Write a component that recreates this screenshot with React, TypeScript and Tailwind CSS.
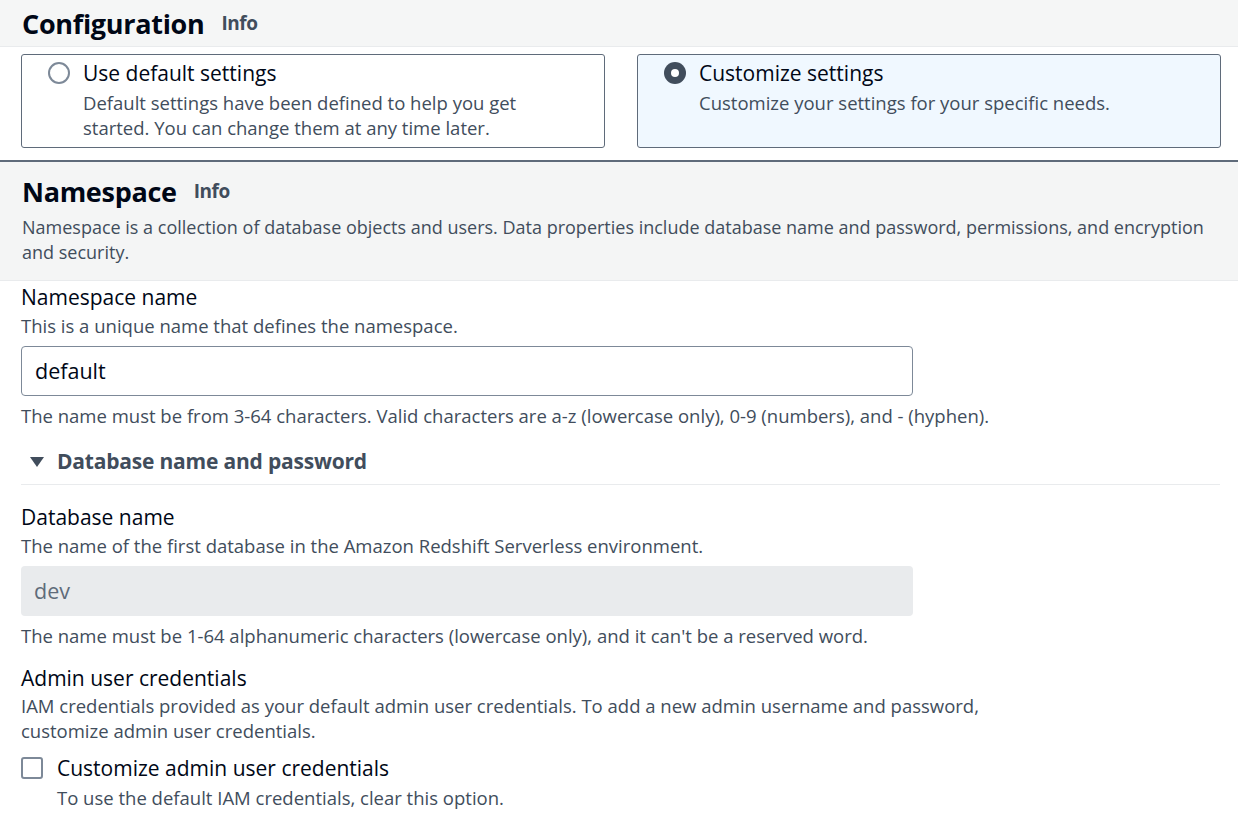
import React from "react";

const Info = () => (
  <span className="ml-[17px] text-[19px] font-bold text-[#414d5c] tracking-tight">Info</span>
);

type TileProps = {
  title: string;
  description: string;
  selected?: boolean;
};

const Tile = ({ title, description, selected }: TileProps) => (
  <div
    className={
      selected
        ? "h-[94px] rounded-[3px] border border-[#5f6b7a] bg-[#f0f8ff] pl-[26px] pr-3 pt-[5px] flex gap-[13px]"
        : "h-[94px] rounded-[3px] border border-[#5f6b7a] bg-white pl-[26px] pr-3 pt-[5px] flex gap-[13px]"
    }
  >
    <div className="pt-[2px]">
      {selected ? (
        <span className="block w-[22px] h-[22px] rounded-full bg-[#414d5c] flex items-center justify-center">
          <span className="block w-[8px] h-[8px] rounded-full bg-white" />
        </span>
      ) : (
        <span className="block w-[22px] h-[22px] rounded-full border-2 border-[#7d8998] bg-white" />
      )}
    </div>
    <div>
      <div className="text-[21px] leading-[27px] text-[#000716]">{title}</div>
      <div className="text-[18.5px] leading-[25px] text-[#414d5c] mt-[3px] max-w-[460px]">{description}</div>
    </div>
  </div>
);

const Field = ({
  label,
  description,
  children,
}: {
  label: string;
  description: React.ReactNode;
  children?: React.ReactNode;
}) => (
  <div>
    <div className="text-[21px] leading-[27px] text-[#000716]">{label}</div>
    <div className="text-[18.5px] leading-[25px] text-[#414d5c] mt-[2px]">{description}</div>
    {children}
  </div>
);

export default function App() {
  return (
    <div className="w-[1238px] min-h-[821px] bg-white font-['Open_Sans',sans-serif] text-[#000716]">
      {/* configuration header */}
      <div className="h-[47px] bg-[#f5f6f6] border-b border-[#e9ebed] px-[22px] flex items-center">
        <h2 className="text-[27px] font-bold tracking-[-0.3px] leading-none">Configuration</h2>
        <Info />
      </div>

      <div className="grid grid-cols-2 gap-8 pl-[21px] pr-[17px] pt-[7px] pb-[12px]">
        <Tile
          title="Use default settings"
          description="Default settings have been defined to help you get started. You can change them at any time later."
        />
        <Tile
          selected
          title="Customize settings"
          description="Customize your settings for your specific needs."
        />
      </div>

      {/* namespace */}
      <div className="border-t-2 border-[#5f6b7a]">
        <div className="bg-[#f4f5f5] border-b border-[#e9ebed] pl-[22px] pr-[16px] pt-[13px] pb-[15px]">
          <div className="flex items-center h-[32px]">
            <h2 className="text-[27px] font-bold tracking-[-0.3px] leading-none">Namespace</h2>
            <Info />
          </div>
          <p className="text-[18px] leading-[25px] text-[#414d5c] mt-[8px]">
            Namespace is a collection of database objects and users. Data properties include database name and
            password, permissions, and encryption and security.
          </p>
        </div>

        <div className="pl-[21px] pr-[18px] pt-[3px]">
          <Field label="Namespace name" description="This is a unique name that defines the namespace.">
            <div className="mt-[8px] w-[892px] h-[50px] rounded-[4px] border border-[#7d8998] px-[13px] flex items-center text-[21.5px]">
              default
            </div>
            <div className="text-[18.5px] leading-[25px] text-[#414d5c] mt-[7px]">
              The name must be from 3-64 characters. Valid characters are a-z (lowercase only), 0-9 (numbers), and - (hyphen).
            </div>
          </Field>

          <div className="mt-[11px] border-b border-[#e9ebed] h-[46px] flex items-center pl-[8px] gap-[12px]">
            <svg width="16" height="14" viewBox="0 0 16 14">
              <path d="M1 2 L15 2 L8 12 Z" fill="#414d5c" />
            </svg>
            <span className="text-[21px] font-bold text-[#414d5c] tracking-[-0.2px]">Database name and password</span>
          </div>

          <div className="mt-[19px]">
            <Field
              label="Database name"
              description="The name of the first database in the Amazon Redshift Serverless environment."
            >
              <div className="mt-[8px] w-[892px] h-[50px] rounded-[4px] bg-[#e9ebed] px-[13px] flex items-center text-[21.5px] text-[#5f6b7a]">
                dev
              </div>
              <div className="text-[18.5px] leading-[25px] text-[#414d5c] mt-[7px]">
                The name must be 1-64 alphanumeric characters (lowercase only), and it can&apos;t be a reserved word.
              </div>
            </Field>
          </div>

          <div className="mt-[17px]">
            <Field
              label="Admin user credentials"
              description={
                <span className="block max-w-[1000px] -mt-[1px]">
                  IAM credentials provided as your default admin user credentials. To add a new admin username and password,
                  customize admin user credentials.
                </span>
              }
            >
              <div className="mt-[12px] flex gap-[14px]">
                <span className="mt-[2px] block w-[22px] h-[22px] rounded-[3px] border-2 border-[#7d8998] bg-white shrink-0" />
                <div>
                  <div className="text-[21px] leading-[27px]">Customize admin user credentials</div>
                  <div className="text-[18.5px] leading-[25px] text-[#414d5c] mt-[3px]">
                    To use the default IAM credentials, clear this option.
                  </div>
                </div>
              </div>
            </Field>
          </div>
        </div>
      </div>
    </div>
  );
}
